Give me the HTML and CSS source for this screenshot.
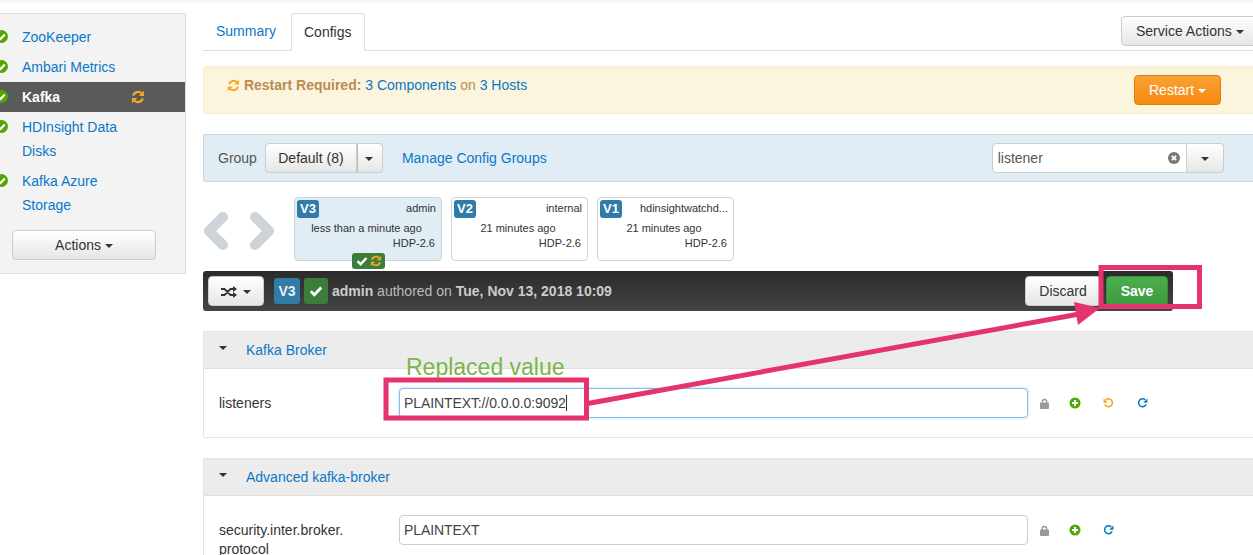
FILE: index.html
```html
<!DOCTYPE html>
<html lang="en">
<head>
<meta charset="utf-8">
<title>Kafka Configs</title>
<link rel="stylesheet" href="styles.css">
</head>
<body>
<svg class="defs" width="0" height="0" aria-hidden="true">
  <symbol id="ok" viewBox="0 0 12 12"><circle cx="6" cy="6" r="6" fill="#53a500"/><path d="M3 6.200 5.200 8.300 9 4.200" fill="none" stroke="#fff" stroke-width="2"/></symbol>
  <symbol id="sync" viewBox="0 0 14 14"><path d="M2.200 5.600A5 5 0 0 1 10.600 3.400" fill="none" stroke="currentColor" stroke-width="2.2"/><path d="M13 .8V6H7.800Z" fill="currentColor"/><path d="M11.800 8.400A5 5 0 0 1 3.400 10.600" fill="none" stroke="currentColor" stroke-width="2.2"/><path d="M1 13.200V8H6.200Z" fill="currentColor"/></symbol>
  <symbol id="check" viewBox="0 0 12 12"><path d="M1.500 6.200 4.600 9.200 10.500 3" fill="none" stroke="currentColor" stroke-width="2.4"/></symbol>
</svg>
<div class="page">
  <aside class="side">
    <ul class="svc-list">
      <li class="svc"><svg class="st"><use href="#ok"/></svg><a>ZooKeeper</a></li>
      <li class="svc"><svg class="st"><use href="#ok"/></svg><a>Ambari Metrics</a></li>
      <li class="svc active"><svg class="st"><use href="#ok"/></svg><a>Kafka</a><svg class="svc-sync"><use href="#sync"/></svg></li>
      <li class="svc tall"><svg class="st"><use href="#ok"/></svg><a>HDInsight Data Disks</a></li>
      <li class="svc tall"><svg class="st"><use href="#ok"/></svg><a>Kafka Azure Storage</a></li>
    </ul>
    <button class="btn actions">Actions <i class="caret"></i></button>
  </aside>
  <main class="main">
    <div class="tabs">
      <a class="tab">Summary</a>
      <a class="tab current">Configs</a>
      <button class="btn svc-actions">Service Actions <i class="caret"></i></button>
    </div>
    <div class="alert">
      <p class="alert-text"><svg class="alert-sync"><use href="#sync"/></svg> <b>Restart Required:</b> <a>3 Components</a> on <a>3 Hosts</a></p>
      <button class="btn restart">Restart <i class="caret"></i></button>
    </div>
    <div class="group">
      <span class="group-label">Group</span>
      <div class="split">
        <button class="btn split-main">Default (8)</button><button class="btn split-caret"><i class="caret"></i></button>
      </div>
      <a class="manage">Manage Config Groups</a>
      <div class="search">
        <div class="search-box"><span>listener</span>
          <svg class="clear" viewBox="0 0 12 12"><circle cx="6" cy="6" r="6" fill="#777"/><path d="M3.800 3.800 8.200 8.200M8.200 3.800 3.800 8.200" stroke="#fff" stroke-width="1.8"/></svg>
        </div><button class="btn search-caret"><i class="caret"></i></button>
      </div>
    </div>
    <div class="versions">
      <svg class="chev" viewBox="0 0 72 38"><path d="M20 5 6 19 20 33M52 5 66 19 52 33" fill="none" stroke="#ccd3d9" stroke-width="10" stroke-linecap="round" stroke-linejoin="round"/></svg>
      <div class="vcard selected">
        <div class="vtop"><span class="vbadge">V3</span><span>admin</span></div>
        <div class="vtime">less than a minute ago</div>
        <div class="vstack">HDP-2.6</div>
        <div class="vstate"><svg class="vs-i"><use href="#check"/></svg><svg class="vs-s"><use href="#sync"/></svg></div>
      </div>
      <div class="vcard v2">
        <div class="vtop"><span class="vbadge">V2</span><span>internal</span></div>
        <div class="vtime">21 minutes ago</div>
        <div class="vstack">HDP-2.6</div>
      </div>
      <div class="vcard v2">
        <div class="vtop"><span class="vbadge">V1</span><span>hdinsightwatchd...</span></div>
        <div class="vtime">21 minutes ago</div>
        <div class="vstack">HDP-2.6</div>
      </div>
    </div>
    <div class="bar">
      <button class="btn shuffle">
        <svg class="shuffle-i" viewBox="0 0 16 12"><path d="M0 3H3.500L9.500 9H12M0 9H3.500L9.500 3H12" fill="none" stroke="#333" stroke-width="1.8"/><path d="M12 0 16 3 12 6ZM12 6 16 9 12 12Z" fill="#333"/></svg>
        <i class="caret"></i>
      </button>
      <span class="bar-v">V3</span>
      <span class="bar-check"><svg class="bar-check-i"><use href="#check"/></svg></span>
      <span class="bar-text"><b>admin</b> authored on <b>Tue, Nov 13, 2018 10:09</b></span>
      <button class="btn discard">Discard</button>
      <button class="btn save">Save</button>
    </div>
    <section class="panel">
      <h4 class="panel-head"><i class="caret"></i><a>Kafka Broker</a></h4>
      <div class="prop">
        <label class="prop-label">listeners</label>
        <div class="input focus">PLAINTEXT://0.0.0.0:9092<i class="cursor"></i></div>
        <div class="prop-icons">
          <svg class="ic lock" viewBox="0 0 10 12"><path d="M2.500 6V4a2.500 2.500 0 0 1 5 0V6" fill="none" stroke="#999" stroke-width="1.5"/><rect y="5" width="10" height="7" rx="1" fill="#999"/></svg>
          <svg class="ic add" viewBox="0 0 12 12"><circle cx="6" cy="6" r="5.5" fill="#53a500"/><path d="M6 3V9M3 6H9" stroke="#fff" stroke-width="2"/></svg>
          <svg class="ic undo" viewBox="0 0 12 12"><path d="M3 2.600A4.300 4.300 0 1 1 2 7.400" fill="none" stroke="#f0a41c" stroke-width="1.7"/><path d="M.6 1V5.600H5.200Z" fill="#f0a41c"/></svg>
          <svg class="ic redo" viewBox="0 0 12 12"><path d="M9 2.600A4.300 4.300 0 1 0 10 7.400" fill="none" stroke="#0a78c8" stroke-width="1.7"/><path d="M11.400 1V5.600H6.800Z" fill="#0a78c8"/></svg>
        </div>
      </div>
    </section>
    <section class="panel second">
      <h4 class="panel-head"><i class="caret"></i><a>Advanced kafka-broker</a></h4>
      <div class="prop">
        <label class="prop-label">security.inter.broker.<br>protocol</label>
        <div class="input">PLAINTEXT</div>
        <div class="prop-icons">
          <svg class="ic lock" viewBox="0 0 10 12"><path d="M2.500 6V4a2.500 2.500 0 0 1 5 0V6" fill="none" stroke="#999" stroke-width="1.5"/><rect y="5" width="10" height="7" rx="1" fill="#999"/></svg>
          <svg class="ic add" viewBox="0 0 12 12"><circle cx="6" cy="6" r="5.5" fill="#53a500"/><path d="M6 3V9M3 6H9" stroke="#fff" stroke-width="2"/></svg>
          <svg class="ic redo" viewBox="0 0 12 12"><path d="M9 2.600A4.300 4.300 0 1 0 10 7.400" fill="none" stroke="#0a78c8" stroke-width="1.7"/><path d="M11.400 1V5.600H6.800Z" fill="#0a78c8"/></svg>
        </div>
      </div>
    </section>
  </main>
</div>
<div class="note">Replaced value</div>
<svg class="marks" width="1253" height="555" viewBox="0 0 1253 555">
  <rect x="1101" y="267.500" width="98.500" height="39" fill="none" stroke="#e5336e" stroke-width="5"/>
  <rect x="386" y="380" width="200.500" height="38" fill="none" stroke="#e5336e" stroke-width="5"/>
  <path d="M585 404 1085 313" stroke="#e5336e" stroke-width="5" fill="none"/>
  <path d="M1074 302 1100 308 1078 325Z" fill="#e5336e"/>
</svg>
</body>
</html>
```
FILE: styles.css
```css
* { box-sizing: border-box; }
html, body { margin: 0; height: 555px; overflow: hidden; background: #fff; }
body { font-family: "Liberation Sans", Arial, sans-serif; font-size: 14px; color: #333; position: relative; }
body::before { content: ""; position: absolute; inset: 0 0 auto 0; height: 4px; background: linear-gradient(#f2f2f2, #fff); }
a { color: #0a78c8; text-decoration: none; }
.defs { position: absolute; }
.page { display: flex; align-items: flex-start; padding-top: 13px; width: 1270px; }

.side { width: 186px; height: 261px; flex: none; background: #f3f3f3; border: 1px solid #ddd; border-left: 0; padding-top: 8px; margin-right: 17px; }
.svc-list { list-style: none; margin: 0; padding: 0; }
.svc { display: flex; align-items: flex-start; height: 30px; line-height: 30px; position: relative; padding-left: 22px; }
.svc.tall { height: 54px; line-height: 24px; padding-top: 3px; padding-right: 50px; }
.svc.active { background: #5a5a5a; }
.svc.active a { color: #fff; font-weight: 700; }
.st { position: absolute; left: -5px; top: 8px; width: 13px; height: 13px; }
.svc-sync { position: absolute; left: 131px; top: 8px; width: 14px; height: 14px; color: #f5a623; }
.btn { font: inherit; color: #333; height: 30px; padding: 0 14px; border: 1px solid #ccc; border-radius: 4px; background: linear-gradient(#fff, #e6e6e6); cursor: pointer; white-space: nowrap; }
.caret { display: inline-block; width: 0; height: 0; vertical-align: middle; border-top: 4px solid #333; border-left: 4px solid transparent; border-right: 4px solid transparent; }
.actions { display: block; width: 144px; margin: 10px 0 0 12px; }

.main { width: 1067px; flex: none; }
.tabs { display: flex; align-items: flex-start; height: 38px; border-bottom: 1px solid #ddd; }
.tab { width: 88px; height: 38px; line-height: 37px; padding-left: 13px; }
.tab.current { width: 74px; color: #333; border: 1px solid #ddd; border-bottom-color: #fff; background: #fff; padding-left: 12px; border-radius: 3px 3px 0 0; }
.svc-actions { margin-left: auto; margin-top: 3px; width: 149px; text-align: left; }

.alert { display: flex; justify-content: space-between; margin-top: 15px; height: 48px; background: #fcf5dd; border: 1px solid #faebcc; border-radius: 3px; color: #b98c53; padding: 8px 48px 0 23px; }
.alert-text { margin: 0; line-height: 20px; }
.alert-sync { width: 13px; height: 13px; color: #f5a623; vertical-align: -2px; }
.restart { width: 87px; background: linear-gradient(#f9a235, #f58a0f); border-color: #e07d0c; color: #fff; padding: 0; }
.restart .caret { border-top-color: #fff; }

.group { display: flex; align-items: center; margin-top: 20px; height: 48px; background: #e1edf4; border: 1px solid #ccd3d9; border-radius: 2px; padding-left: 14px; }
.group-label { color: #555; margin-right: 8px; margin-top: -1px; }
.split { display: flex; }
.split-main { width: 92px; padding: 0; border-radius: 4px 0 0 4px; }
.split-caret { width: 26px; padding: 0; border-left: 0; border-radius: 0 4px 4px 0; box-shadow: inset 1px 0 #bbb; }
.manage { margin-left: 19px; margin-top: -1px; }
.search { display: flex; margin-left: 445px; }
.search-box { width: 195px; height: 30px; display: flex; align-items: center; justify-content: space-between; padding: 0 6px 0 5px; background: #fff; border: 1px solid #ccc; border-radius: 4px 0 0 4px; color: #555; }
.clear { width: 12px; height: 12px; }
.search-caret { width: 37px; padding: 0; border-left: 0; border-radius: 0 4px 4px 0; }

.versions { display: flex; align-items: flex-start; margin-top: 15px; height: 64px; font-size: 11px; }
.chev { width: 72px; height: 38px; margin: 15px 19px 0 0; flex: none; }
.vcard { position: relative; width: 137px; height: 64px; margin-right: 9px; padding: 2px 5px 0 2px; background: #fff; border: 1px solid #ccd3d9; border-radius: 4px; }
.vcard.selected { width: 148px; background: #e1edf4; }
.vtop { display: flex; justify-content: space-between; line-height: 16px; }
.vbadge { background: #307ba8; color: #fff; font-weight: 700; font-size: 13px; padding: 0 3px; height: 18px; line-height: 17px; border-radius: 3px; }
.vtime { text-align: center; margin-top: 2px; line-height: 16px; }
.vstack { text-align: right; padding-right: 1px; line-height: 14px; }
.vstate { position: absolute; left: 57px; top: 55px; width: 33px; height: 16px; display: flex; align-items: center; justify-content: center; gap: 2px; background: #3c7d3c; border-radius: 3px; }
.vs-i { width: 12px; height: 12px; color: #fff; }
.vs-s { width: 12px; height: 12px; color: #f5a623; }

.bar { display: flex; align-items: center; margin-top: 10px; width: 970px; height: 40px; padding: 0 5px; border-radius: 3px; background: linear-gradient(#2b2b2b, #444); color: #bbb; }
.shuffle { width: 56px; padding: 0; margin-right: 10px; }
.shuffle-i { width: 16px; height: 12px; vertical-align: middle; margin-right: 3px; }
.bar-v { width: 26px; height: 26px; line-height: 26px; text-align: center; background: #307ba8; color: #eee; font-weight: 700; border-radius: 3px; margin-right: 4px; }
.bar-check { width: 24px; height: 26px; display: flex; align-items: center; justify-content: center; background: #3c7d3c; border-radius: 3px; margin-right: 4px; }
.bar-check-i { width: 14px; height: 14px; color: #fff; }
.bar-text b { color: #ccc; }
.discard { width: 76px; margin-left: auto; padding: 0; }
.save { width: 62px; margin-left: 5px; padding: 0; background: linear-gradient(#4cae4c, #3f9a3f); border-color: #3b8f3b; color: #fff; font-weight: 700; }

.panel { margin-top: 20px; height: 107px; border: 1px solid #e3e3e3; }
.panel.second { margin-top: 20px; height: 120px; }
.panel-head { display: flex; align-items: center; height: 37px; margin: 0; font-weight: 400; background: #ececec; border-bottom: 1px solid #e0e0e0; padding: 0 0 0 15px; }
.panel-head .caret { margin: -5px 19px 0 0; }
.prop { display: flex; align-items: flex-start; padding: 19px 0 0 15px; }
.prop-label { width: 180px; flex: none; line-height: 19px; padding-top: 5px; margin-top: 1px; }
.input { position: relative; width: 629px; height: 30px; line-height: 28px; padding: 0 4px; letter-spacing: -.1px; background: #fff; border: 1px solid #ccc; border-radius: 4px; color: #444; }
.input.focus { border-color: #80bdf0; box-shadow: 0 0 3px rgba(102, 175, 233, .5); }
.cursor { display: inline-block; width: 1px; height: 16px; background: #333; vertical-align: -3px; }
.prop-icons { display: flex; align-items: center; height: 30px; margin-left: 12px; }
.ic { width: 11px; height: 12px; flex: none; margin-right: 23px; }
.lock { width: 9px; height: 11px; margin-right: 20px; }
.add { width: 12px; margin-right: 22px; }

.note { position: absolute; left: 406px; top: 353px; font-size: 23px; line-height: 28px; color: #7ab648; }
.marks { position: absolute; left: 0; top: 0; pointer-events: none; }
```
